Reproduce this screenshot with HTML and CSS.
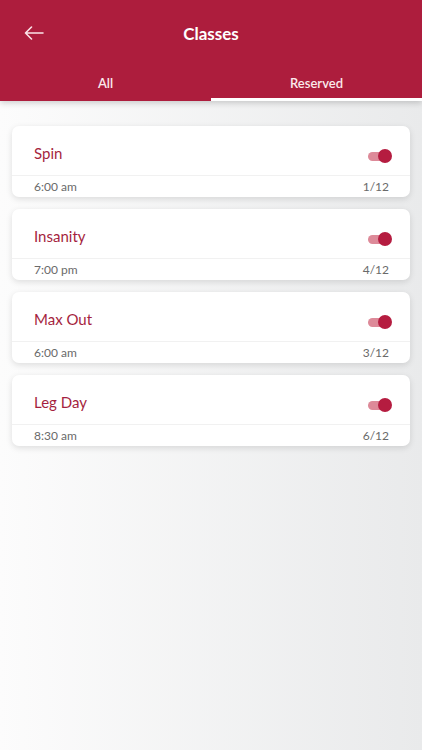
FILE: index.html
```html
<!DOCTYPE html>
<html>
<head>
<title>Classes</title>
<link rel="stylesheet" href="styles.css">
</head>
<body>

<div class="header">
    <div class="topbar">
        <a href="#back" class="back">
            <svg width="20" height="14" viewBox="0 0 20 14"><path d="M19 7H1.5M7.5 1L1.5 7l6 6" fill="none" stroke="#fbe3e8" stroke-width="1.6" stroke-linecap="round" stroke-linejoin="round"/></svg>
        </a>
        <h1>Classes</h1>
    </div>
    <div class="tabs">
        <div class="tab">All</div>
        <div class="tab active">Reserved</div>
    </div>
</div>

<div class="list">
    <div class="card">
        <div class="card-top">
            <span class="name">Spin</span>
            <span class="toggle"><span class="knob"></span></span>
        </div>
        <div class="card-bottom"><span>6:00 am</span><span>1/12</span></div>
    </div>
    <div class="card">
        <div class="card-top">
            <span class="name">Insanity</span>
            <span class="toggle"><span class="knob"></span></span>
        </div>
        <div class="card-bottom"><span>7:00 pm</span><span>4/12</span></div>
    </div>
    <div class="card">
        <div class="card-top">
            <span class="name">Max Out</span>
            <span class="toggle"><span class="knob"></span></span>
        </div>
        <div class="card-bottom"><span>6:00 am</span><span>3/12</span></div>
    </div>
    <div class="card">
        <div class="card-top">
            <span class="name">Leg Day</span>
            <span class="toggle"><span class="knob"></span></span>
        </div>
        <div class="card-bottom"><span>8:30 am</span><span>6/12</span></div>
    </div>
</div>

</body>
</html>
```
FILE: styles.css
```css
html, body {
    margin: 0;
    height: 100%;
}

body {
    font-family: Lato, "Open Sans", sans-serif;
    background: linear-gradient(to right, #fcfcfc, #e9eaeb);
}

.header {
    background: #ad1d3d;
    color: #fff;
    box-shadow: 0 2px 6px rgba(0, 0, 0, 0.18);
}

.topbar {
    position: relative;
    height: 66px;
    display: flex;
    align-items: center;
    justify-content: center;
}

.topbar h1 {
    margin: 0;
    font-size: 17px;
    font-weight: bold;
}

.back {
    position: absolute;
    left: 24px;
    top: 26px;
    display: flex;
}

.tabs {
    display: flex;
    height: 35px;
}

.tab {
    flex: 1;
    display: flex;
    align-items: center;
    justify-content: center;
    padding-top: 2px;
    font-size: 13px;
    font-weight: 600;
    color: #fbe9ec;
    border-bottom: 3px solid transparent;
    box-sizing: border-box;
}

.tab.active {
    border-bottom-color: #fff;
}

.list {
    padding: 25px 12px;
    display: flex;
    flex-direction: column;
    gap: 12px;
}

.card {
    background: #fff;
    border-radius: 7px;
    box-shadow: 0 2px 6px rgba(0, 0, 0, 0.12);
}

.card-top {
    height: 49px;
    display: flex;
    align-items: center;
    justify-content: space-between;
    padding: 0 21px 0 22px;
    border-bottom: 1px solid #f1f1f1;
}

.name {
    color: #a51f40;
    font-size: 15px;
    padding-top: 4px;
}

.toggle {
    position: relative;
    width: 21px;
    height: 9px;
    border-radius: 5px;
    background: #dd8a99;
    margin-top: 11px;
}

.knob {
    position: absolute;
    right: -3px;
    top: -3px;
    width: 14px;
    height: 14px;
    border-radius: 50%;
    background: #b51c40;
}

.card-bottom {
    height: 21px;
    display: flex;
    align-items: center;
    justify-content: space-between;
    padding: 0 21px 0 22px;
    font-size: 12px;
    color: #6a6a6a;
}
```
